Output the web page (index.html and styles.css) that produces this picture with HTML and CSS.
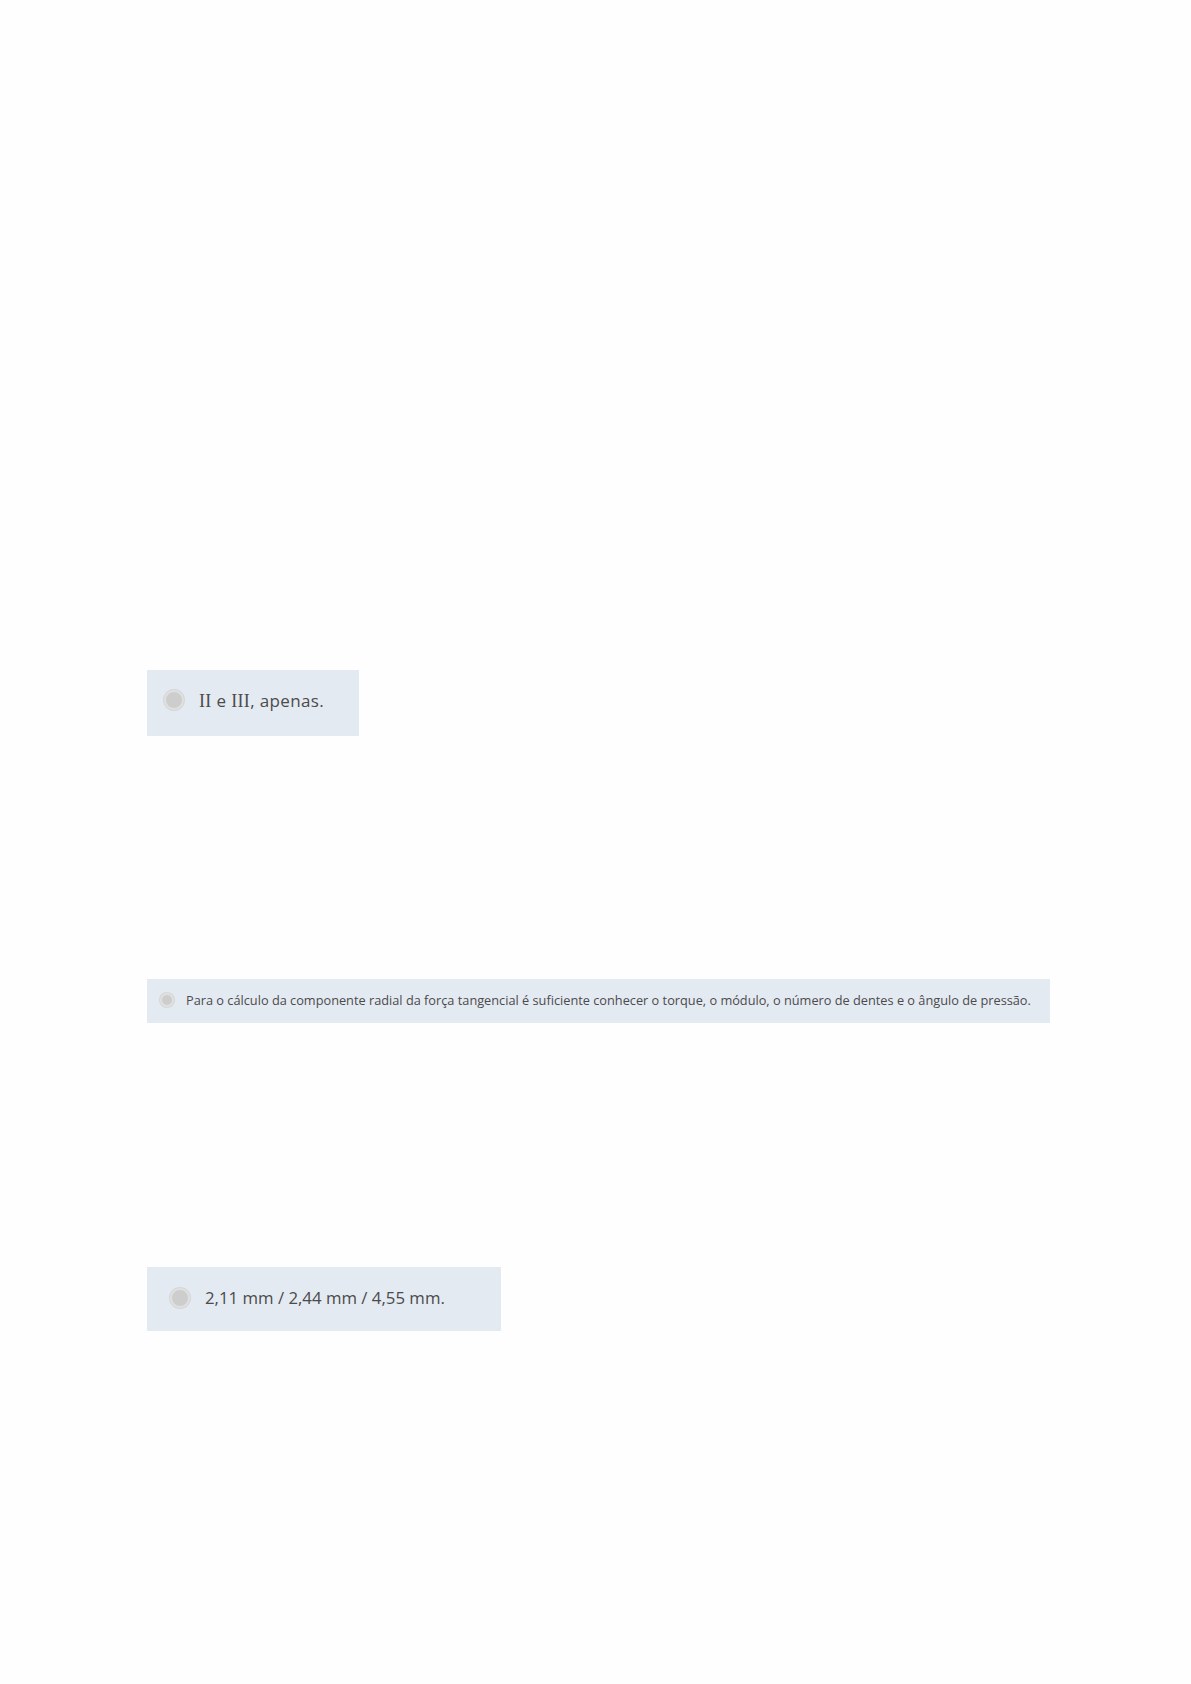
FILE: index.html
```html
<!DOCTYPE html>
<html lang="pt-BR">
<head>
    <meta charset="UTF-8">
    <meta name="viewport" content="width=device-width, initial-scale=1.0">
    <title>Questões</title>
    <link rel="stylesheet" href="styles.css">
</head>
<body>
    <main class="page">
        <div class="option option-first">
            <span class="radio"></span>
            <span class="label"><span class="numeral">II</span> e <span class="numeral">III</span>, apenas.</span>
        </div>
        <div class="option option-long">
            <span class="radio"></span>
            <span class="label">Para o cálculo da componente radial da força tangencial é suficiente conhecer o torque, o módulo, o número de dentes e o ângulo de pressão.</span>
        </div>
        <div class="option option-last">
            <span class="radio"></span>
            <span class="label">2,11 mm / 2,44 mm / 4,55 mm.</span>
        </div>
    </main>
</body>
</html>
```

FILE: styles.css
```css
body {
    margin: 0;
    background-color: #fefefe;
    font-family: "Open Sans", Arial, sans-serif;
    color: #4b4b4b;
}
.page {
    display: flex;
    flex-direction: column;
    align-items: flex-start;
    padding: 670px 0 0 147px;
    height: 1014px;
}
.option {
    display: flex;
    align-items: center;
    box-sizing: border-box;
    background-color: #e4eaf2;
}
.radio {
    flex-shrink: 0;
    box-sizing: border-box;
    border-radius: 50%;
    background-color: #cdcdcd;
    border: 2px solid #e0e0e0;
    box-shadow: 0 0 0 1px #d6d6d6;
}
.numeral {
    font-family: "Liberation Serif", "Times New Roman", serif;
    font-size: 18px;
}
.option-first {
    width: 212px;
    height: 66px;
    padding-left: 17px;
    padding-bottom: 6px;
}
.option-first .radio {
    width: 20px;
    height: 20px;
    margin-right: 15px;
}
.option-first .label {
    font-size: 17px;
    letter-spacing: 0.35px;
}
.option-long {
    width: 903px;
    height: 44px;
    margin-top: 243px;
    padding-left: 13px;
    padding-bottom: 3px;
}
.option-long .radio {
    width: 14px;
    height: 14px;
    margin-right: 12px;
}
.option-long .label {
    font-size: 12.75px;
}
.option-last {
    width: 354px;
    height: 64px;
    margin-top: 244px;
    padding-left: 23px;
    padding-bottom: 3px;
}
.option-last .radio {
    width: 20px;
    height: 20px;
    margin-right: 15px;
}
.option-last .label {
    font-size: 16.8px;
}
```
